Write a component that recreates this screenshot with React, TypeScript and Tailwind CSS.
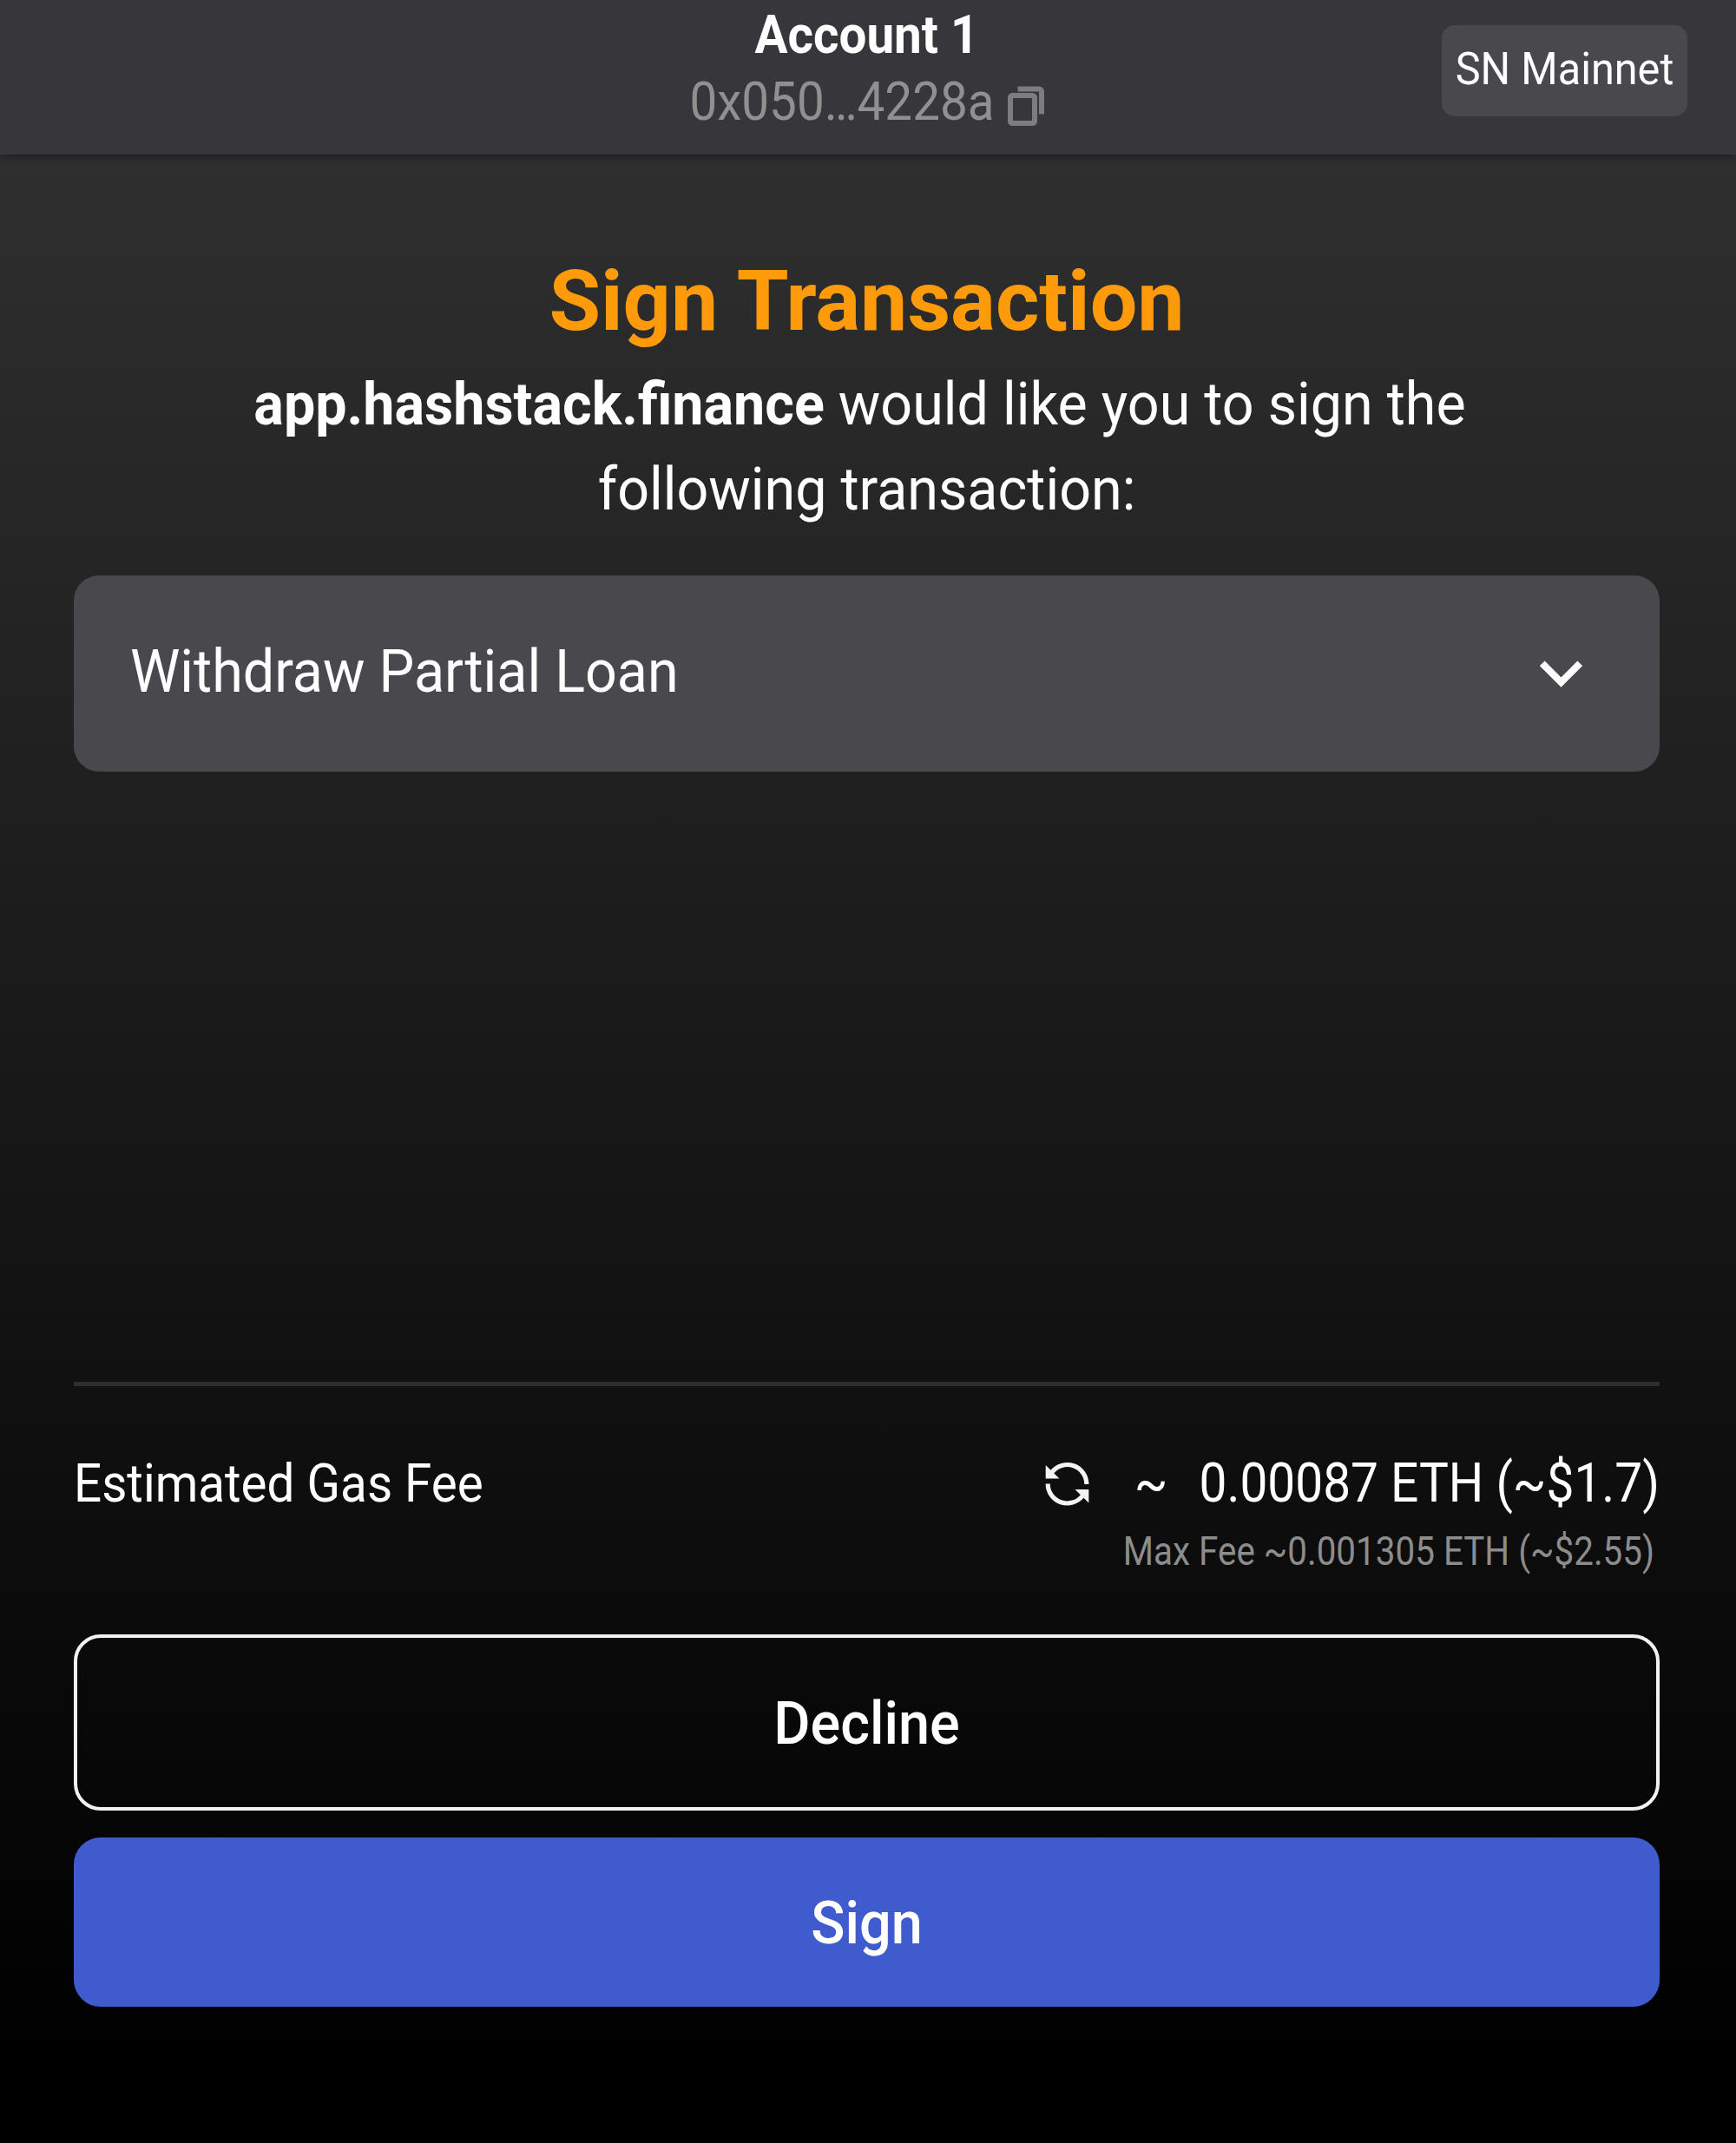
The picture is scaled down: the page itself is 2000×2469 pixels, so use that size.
function CopyIcon() {
  return (
    <svg width="46" height="52" viewBox="0 0 46 52" fill="none" stroke="#7d7d7f" strokeWidth="6" className="shrink-0">
      <rect x="4" y="13" width="28" height="32" rx="2.5" />
      <path d="M12.5 5.5H37a3 3 0 0 1 3 3V34.5" />
    </svg>
  );
}

function ChevronIcon() {
  return (
    <svg width="49" height="33" viewBox="0 0 49 33" fill="none" stroke="#ffffff" strokeWidth="8" className="shrink-0">
      <path d="M2.8 4.3L24.5 26L46.2 4.3" />
    </svg>
  );
}

function RefreshIcon() {
  return (
    <svg width="51" height="51" viewBox="9 8 51 51" fill="none" className="shrink-0">
      <g stroke="#f4f4f4" strokeWidth="5.2">
        <path d="M17 20A22.3 22.3 0 0 1 56.8 34" />
        <path d="M12.2 33.5A22.3 22.3 0 0 0 52 47.5" />
      </g>
      <g fill="#f4f4f4">
        <path d="M9.7 12V27.5H25.5Z" />
        <path d="M59.3 55.5V40H43.5Z" />
      </g>
    </svg>
  );
}

export default function App() {
  return (
    <div className="flex h-[2469px] w-[2000px] flex-col overflow-hidden bg-black font-['Roboto',sans-serif] text-white">
      <header className="z-10 grid h-[178px] shrink-0 grid-cols-[1fr_auto_1fr] items-start bg-[#37363b] pr-[3px] shadow-[0_2px_10px_rgba(0,0,0,0.4)]">
        <div />
        <div className="flex flex-col items-center pt-[1px]">
          <div className="scale-y-[1.095] text-[56.6px] leading-[78px] font-bold">Account 1</div>
          <div className="flex items-center gap-[14px] text-[#909091]">
            <span className="scale-y-[1.095] text-[56.6px] leading-[76px]">0x050…4228a</span>
            <div className="mt-[11px] -mr-[3px]">
              <CopyIcon />
            </div>
          </div>
        </div>
        <button className="mt-[29px] mr-[53px] flex h-[105px] w-[283px] items-center justify-center justify-self-end rounded-[15px] bg-[#49484d] pb-[3px]">
          <span className="scale-y-[1.055] text-[48.6px] leading-[60px] font-[450]">SN Mainnet</span>
        </button>
      </header>

      <main className="flex flex-1 flex-col bg-[linear-gradient(180deg,#2f2f2f_0%,#000000_96%)] pr-[88px] pl-[85px]">
        <h1 className="mt-[111px] text-center text-[96.8px] leading-[116px] font-bold text-[#ff9b0b]">Sign Transaction</h1>
        <div className="mt-[13px] text-center text-[64.6px] leading-[97.5px] whitespace-nowrap">
          <p className="scale-y-[1.055] pr-[16px]">
            <strong className="font-bold">app.hashstack.finance</strong> would like you to sign the
          </p>
          <p className="scale-y-[1.055]">following transaction:</p>
        </div>

        <button className="mt-[50px] flex h-[226px] items-center justify-between rounded-[29px] bg-[#49484d] pr-[89px] pl-[65px]">
          <span className="mb-[4px] scale-y-[1.055] text-[64.6px] leading-[97px]">Withdraw Partial Loan</span>
          <ChevronIcon />
        </button>

        <div className="flex-1" />

        <section className="border-t-[5px] border-[#2e2e2e]">
          <div className="mt-[72px] flex items-center justify-between text-[56.8px] leading-[80px]">
            <span className="scale-y-[1.095] text-[56.6px]">Estimated Gas Fee</span>
            <div className="flex items-center">
              <RefreshIcon />
              <span className="ml-[52px] scale-y-[1.095]">~</span>
              <span className="ml-[36px] scale-y-[1.095]">0.00087 ETH (~$1.7)</span>
            </div>
          </div>
          <div className="mt-[11px] flex justify-end pr-[6px]">
            <span className="scale-y-[1.125] text-[40.4px] leading-[56px] text-[#8c8c8c]">Max Fee ~0.001305 ETH (~$2.55)</span>
          </div>
        </section>

        <div className="mt-[67px] mb-[157px] flex flex-col gap-[31px] text-[64.8px] leading-[97px] font-medium">
          <button className="flex h-[203px] items-center justify-center rounded-[31px] border-4 border-[#f2f2f2] pt-[3px]">
            <span className="scale-y-[1.05]">Decline</span>
          </button>
          <button className="flex h-[195px] items-center justify-center rounded-[31px] bg-[#405bcd] pt-[4px]">
            <span className="scale-y-[1.05]">Sign</span>
          </button>
        </div>
      </main>
    </div>
  );
}
